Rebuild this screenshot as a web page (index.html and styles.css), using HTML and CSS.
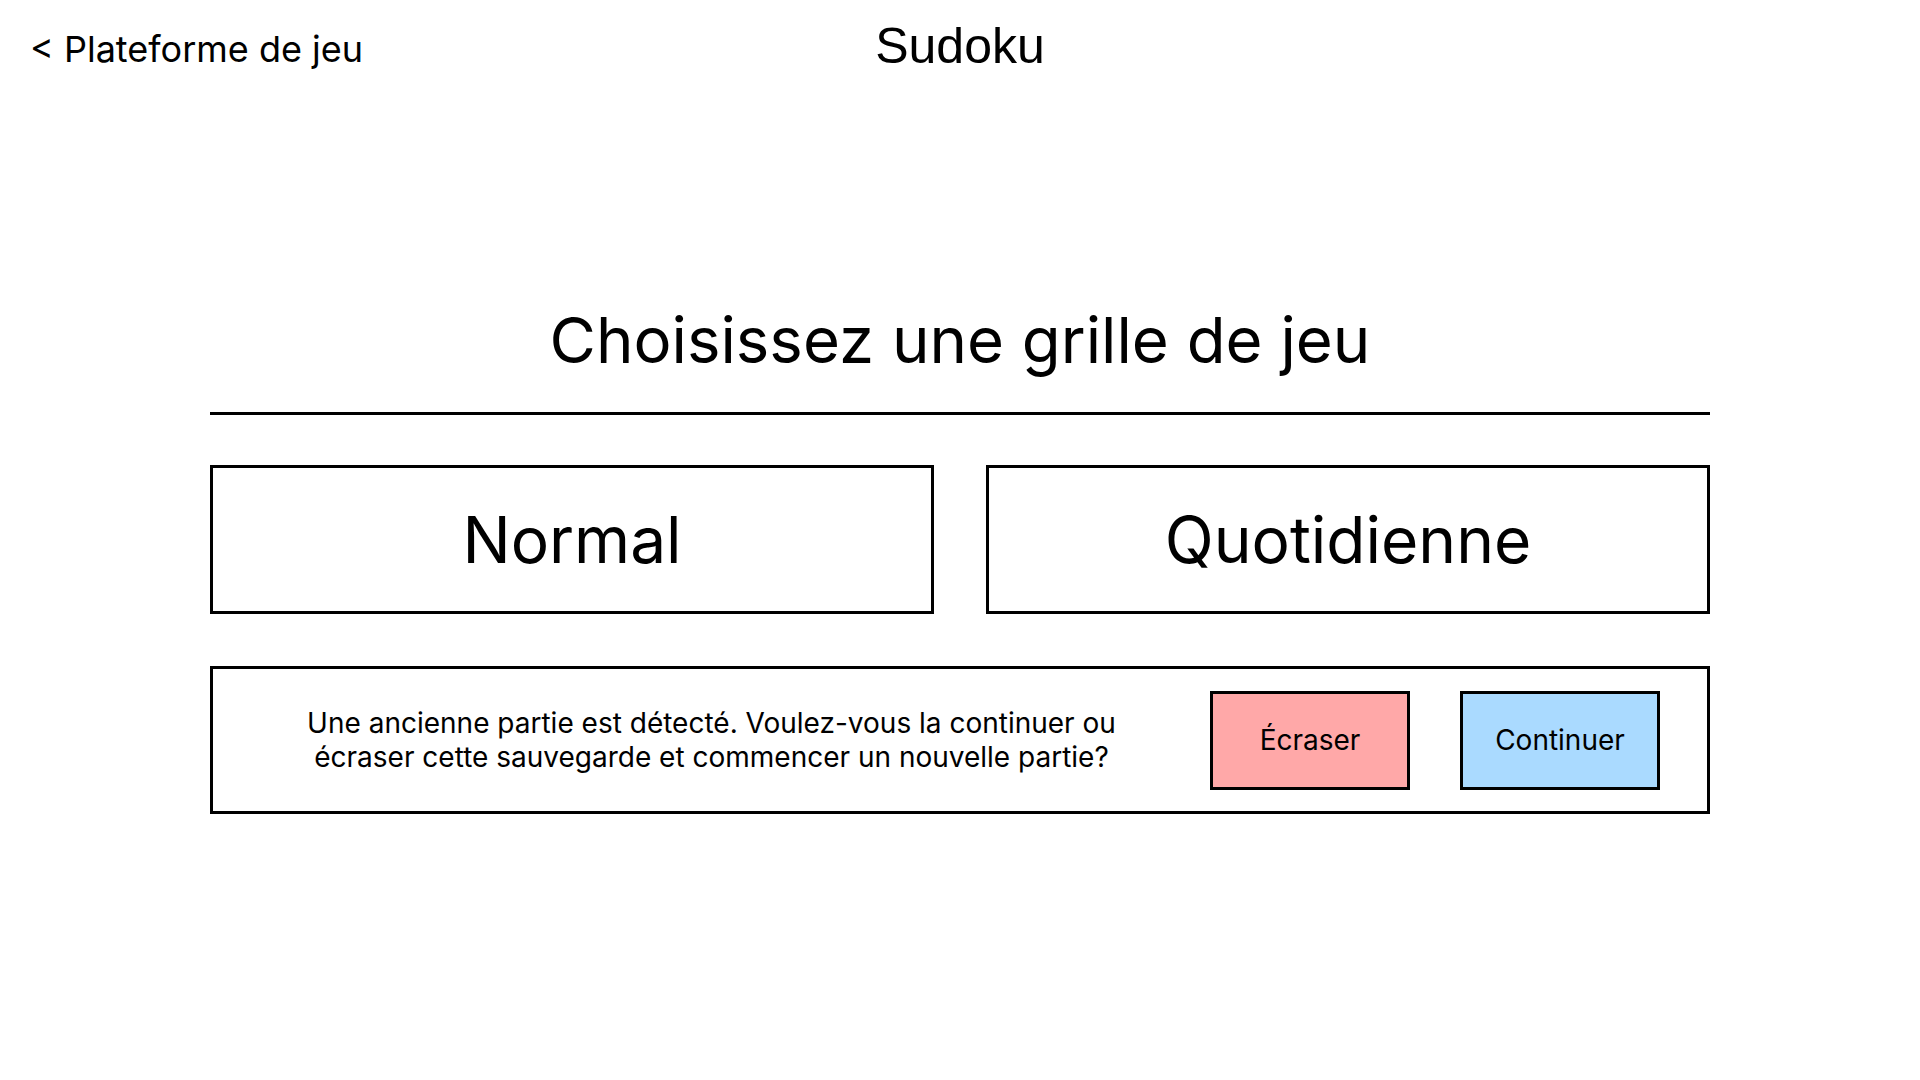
FILE: index.html
```html
<!DOCTYPE html>
<html lang="fr">
<head>
<meta charset="utf-8">
<title>Sudoku</title>
<link rel="stylesheet" href="styles.css">
</head>
<body>
<header class="topbar">
  <a class="back" href="#">&lt; Plateforme de jeu</a>
  <h1 class="app-title">Sudoku</h1>
  <span class="spacer"></span>
</header>
<main class="content">
  <h2 class="heading">Choisissez une grille de jeu</h2>
  <div class="modes">
    <button class="mode">Normal</button>
    <button class="mode">Quotidienne</button>
  </div>
  <div class="notice">
    <p class="notice-text">Une ancienne partie est détecté. Voulez-vous la continuer ou écraser cette sauvegarde et commencer un nouvelle partie?</p>
    <button class="action action-erase">Écraser</button>
    <button class="action action-continue">Continuer</button>
  </div>
</main>
</body>
</html>
```

FILE: styles.css
```css
* { box-sizing: border-box; }

html, body {
  margin: 0;
  padding: 0;
  background: #ffffff;
  color: #000000;
  font-family: "Inter", "Liberation Sans", sans-serif;
}

.topbar {
  display: grid;
  grid-template-columns: 1fr auto 1fr;
  align-items: start;
  padding: 17px 30px 0 30px;
}

.back {
  justify-self: start;
  margin-top: 10px;
  font-size: 36px;
  line-height: 44px;
  color: #000;
  text-decoration: none;
}

.app-title {
  margin: 0;
  font-family: "Liberation Sans", Arial, sans-serif;
  font-weight: 400;
  font-size: 50px;
  line-height: 58px;
}

.content {
  width: 1500px;
  margin: 226px auto 0 auto;
  display: flex;
  flex-direction: column;
}

.heading {
  margin: 0;
  font-size: 63.5px;
  font-weight: 400;
  line-height: 78px;
  text-align: center;
  padding-bottom: 33px;
  border-bottom: 3px solid #000;
}

.modes {
  display: grid;
  grid-template-columns: 1fr 1fr;
  gap: 52px;
  margin-top: 50px;
}

.mode {
  height: 149px;
  border: 3px solid #000;
  background: #fff;
  font-family: "Inter", sans-serif;
  font-size: 64px;
  color: #000;
  padding: 0;
}

.notice {
  margin-top: 52px;
  height: 148px;
  border: 3px solid #000;
  display: flex;
  align-items: center;
  gap: 50px;
  padding: 0 47px 0 50px;
}

.notice-text {
  flex: 1;
  margin: 0;
  font-size: 28px;
  line-height: 34px;
  text-align: center;
}

.action {
  width: 200px;
  height: 99px;
  border: 3px solid #000;
  font-family: "Inter", sans-serif;
  font-size: 28px;
  color: #000;
  padding: 0;
}

.action-erase { background: #ffa8a8; }
.action-continue { background: #aadaff; }
```
